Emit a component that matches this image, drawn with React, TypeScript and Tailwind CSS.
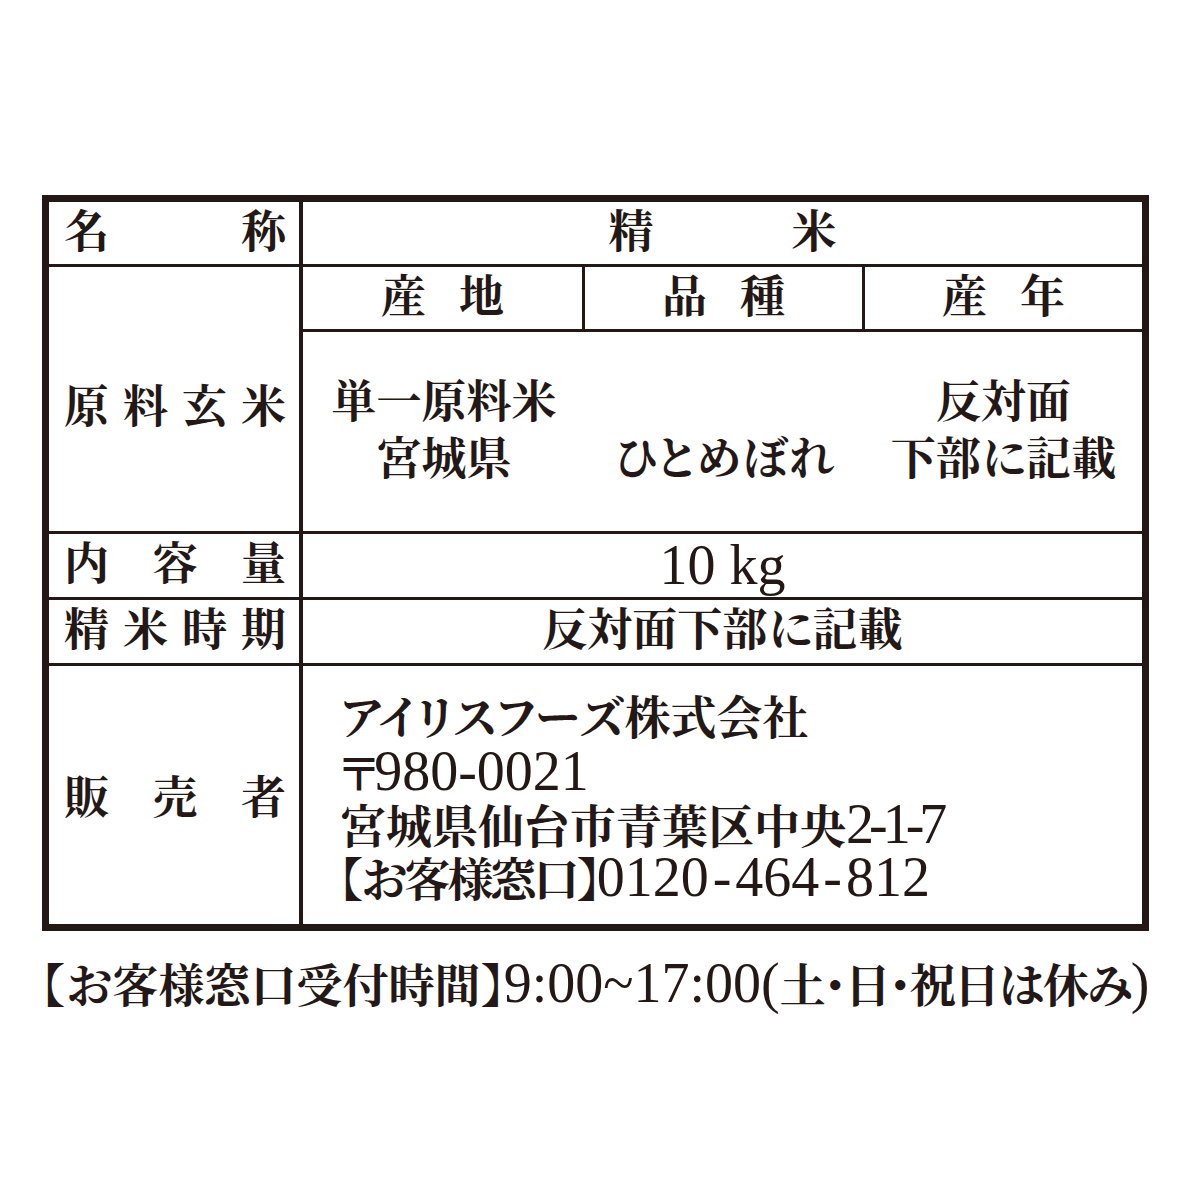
import React from 'react';

// latin / digits are set larger, like the mincho's own proportional latin
function L({ children, className = '' }: { children: React.ReactNode; className?: string }) {
  return <span className={`inline-block h-[53px] text-[56px] font-normal ${className}`}>{children}</span>;
}

function Label({ chars, className = '' }: { chars: string[]; className?: string }) {
  return (
    <div
      className={`w-[254px] shrink-0 border-r-[4px] border-[#231815] flex items-center justify-between pl-[15px] pr-[13px] text-[45px] font-bold ${className}`}
    >
      {chars.map((c, i) => (
        <span key={i}>{c}</span>
      ))}
    </div>
  );
}

export default function App() {
  return (
    <div className="w-[1200px] min-h-[1200px] bg-white text-[#231815] font-['Liberation_Serif','Noto_Serif_CJK_JP','Noto_Sans_CJK_JP',serif] leading-none [font-feature-settings:'palt']">
      <div className="pt-[195px] pl-[42px]">
        <div className="w-[1107px] h-[736px] border-[7px] border-[#231815] flex flex-col">
          {/* 名称 */}
          <div className="flex h-[65px] shrink-0 border-b-[3px] border-[#231815]">
            <Label chars={['名', '称']} />
            <div className="flex-1 flex items-center justify-center gap-[138px] text-[45px] font-bold">
              <span>精</span>
              <span>米</span>
            </div>
          </div>

          {/* 原料玄米 */}
          <div className="flex h-[267px] shrink-0 border-b-[3px] border-[#231815]">
            <Label chars={['原', '料', '玄', '米']} className="pt-[18px]" />
            <div className="flex-1 flex flex-col">
              <div className="flex h-[65px] shrink-0 border-b-[3px] border-[#231815] text-[45px] font-bold">
                <div className="w-[282px] border-r-[3px] border-[#231815] flex items-center justify-center gap-[33px]">
                  <span>産</span>
                  <span>地</span>
                </div>
                <div className="w-[280px] border-r-[3px] border-[#231815] flex items-center justify-center gap-[33px]">
                  <span>品</span>
                  <span>種</span>
                </div>
                <div className="flex-1 flex items-center justify-center gap-[33px]">
                  <span>産</span>
                  <span>年</span>
                </div>
              </div>
              <div className="flex-1 flex text-[45px] font-bold leading-[57px]">
                <div className="w-[282px] flex flex-col items-center justify-center">
                  <span>単一原料米</span>
                  <span>宮城県</span>
                </div>
                <div className="w-[280px] flex flex-col items-center justify-center">
                  <span>&nbsp;</span>
                  <span>ひとめぼれ</span>
                </div>
                <div className="flex-1 flex flex-col items-center justify-center">
                  <span>反対面</span>
                  <span>下部に記載</span>
                </div>
              </div>
            </div>
          </div>

          {/* 内容量 */}
          <div className="flex h-[66px] shrink-0 border-b-[3px] border-[#231815]">
            <Label chars={['内', '容', '量']} />
            <div className="flex-1 flex items-center justify-center leading-[53px]">
              <L>10 kg</L>
            </div>
          </div>

          {/* 精米時期 */}
          <div className="flex h-[66px] shrink-0 border-b-[3px] border-[#231815]">
            <Label chars={['精', '米', '時', '期']} />
            <div className="flex-1 flex items-center justify-center text-[45px] font-bold">
              反対面下部に記載
            </div>
          </div>

          {/* 販売者 */}
          <div className="flex flex-1">
            <Label chars={['販', '売', '者']} className="pt-[8px]" />
            <div className="flex-1 flex flex-col justify-center pl-[37px] pt-[6px] text-[46px] font-bold leading-[53px]">
              <div className="h-[53px] whitespace-nowrap">アイリスフーズ株式会社</div>
              <div className="h-[53px] whitespace-nowrap">
                <span className="mr-[-4px]">〒</span>
                <L>980-0021</L>
              </div>
              <div className="h-[53px] whitespace-nowrap">
                宮城県仙台市青葉区中央<L className="tracking-[-5px]">2-1-7</L>
              </div>
              <div className="h-[53px] whitespace-nowrap">
                <span className="tracking-[-3px]">【お客様窓口】</span>
                <L>
                  0120<span className="mx-[4px]">-</span>464<span className="mx-[4px]">-</span>812
                </L>
              </div>
            </div>
          </div>
        </div>

        {/* 受付時間 */}
        <div className="mt-[22px] h-[60px] text-[46px] font-bold leading-[60px] whitespace-nowrap">
          【お客様窓口受付時間】
          <L className="h-[60px]">9:00~17:00(</L>
          <span className="tracking-[-2px]">土・日・祝日は休み</span>
          <L className="h-[60px]">)</L>
        </div>
      </div>
    </div>
  );
}
